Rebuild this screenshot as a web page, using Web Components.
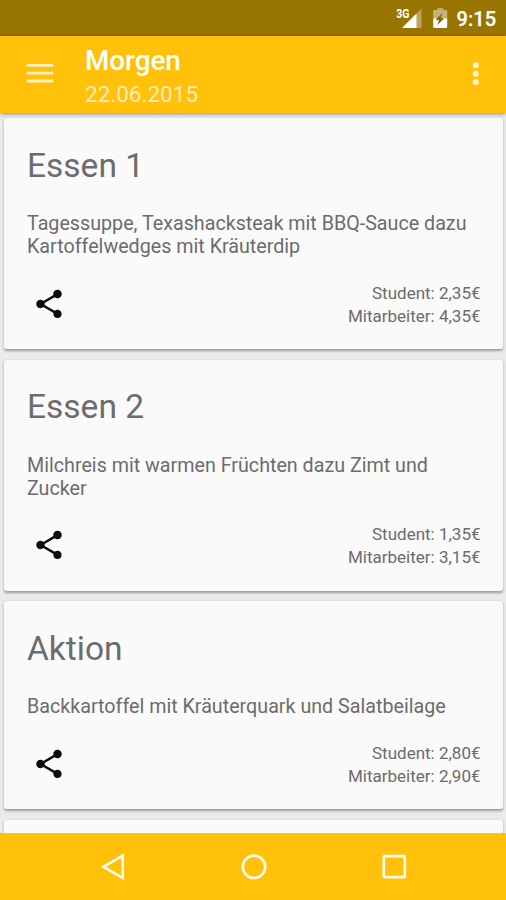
<!DOCTYPE html>
<html lang="de">
<head>
<meta charset="utf-8">
<title>Mensa</title>
<style>
html, body { margin: 0; height: 100%; overflow: hidden; }
body { font-family: Roboto, "Liberation Sans", sans-serif; }
</style>
</head>
<body>
<canteen-app></canteen-app>
<script>
const define = (name, html) => {
  const template = document.createElement('template');
  template.innerHTML = html;
  customElements.define(name, class extends HTMLElement {
    constructor() {
      super();
      this.attachShadow({ mode: 'open' }).append(template.content.cloneNode(true));
    }
  });
};

define('status-bar', `
<style>
:host { display: flex; justify-content: flex-end; align-items: center; height: 35.5px; padding-right: 11px; box-sizing: border-box; background: #987400; color: #fff; flex: none; }
time { font-size: 20px; line-height: 24px; font-weight: 500; width: 38.5px; white-space: nowrap; margin-top: 2px; letter-spacing: 0.1px; -webkit-text-stroke: .25px #fff; }
svg { flex: none; }
.signal { margin-right: 11px; }
.battery { margin-right: 9px; }
</style>
<svg class="signal" width="26" height="36" viewBox="396 0 26 36">
  <path d="M421.5 8.5V28H402z" fill="#fff" fill-opacity=".35"/>
  <path d="M416.5 13.5V28H402z" fill="#fff"/>
  <text x="396.3" y="17.6" font-size="12" font-weight="700" textLength="13.2" lengthAdjust="spacingAndGlyphs" fill="#fff">3G</text>
</svg>
<svg class="battery" width="15" height="36" viewBox="433 0 15 36">
  <path d="M433.2 11.2q0-1.2 1.2-1.2h2.8V8.2h6V10h2.8q1.2 0 1.2 1.2V19h-14z" fill="#fff" fill-opacity=".45"/>
  <path d="M433.2 18.5h14v8.3q0 1.2-1.2 1.2h-11.6q-1.2 0-1.2-1.2z" fill="#fff"/>
  <path d="M442.6 12.8 435.8 19.4l3.2 1.2-1.8 4.6 6.8-6.4-3.2-1.2z" fill="#8a6900"/>
</svg>
<time>9:15</time>`);

define('app-toolbar', `
<style>
:host { display: flex; height: 77.5px; background: #ffc10a; flex: none; position: relative; z-index: 1; box-shadow: 0 1px 4px rgba(0,0,0,.42); }
.menu { margin-left: 26px; width: 59px; }
.text { flex: 1; padding-top: 9px; }
slot { display: block; white-space: nowrap; }
slot[name=title] { color: #fff; font-size: 27.8px; font-weight: 500; line-height: 32px; }
slot[name=subtitle] { color: #fff; opacity: .7; font-size: 22.5px; line-height: 32px; margin-top: 1px; }
svg { flex: none; }
</style>
<svg class="menu" width="59" height="77" viewBox="26 36 59 77"><path d="M26.7 65.3h26.4M26.7 73.2h26.4M26.7 81h26.4" stroke="#fff" stroke-opacity=".75" stroke-width="2.8"/></svg>
<div class="text"><slot name="title"></slot><slot name="subtitle"></slot></div>
<svg width="40" height="77" viewBox="466 36 40 77" fill="#fff" fill-opacity=".82"><circle cx="475.7" cy="65.3" r="3"/><circle cx="475.7" cy="73.7" r="3"/><circle cx="475.7" cy="82" r="3"/></svg>`);

define('share-button', `
<style>:host { display: block; width: 34px; height: 34px; } svg { display: block; }</style>
<svg width="34" height="34" viewBox="0 0 24 24" fill="#0c0c0c"><path d="M18 16.08c-.76 0-1.44.3-1.96.77L8.91 12.7c.05-.23.09-.46.09-.7s-.04-.47-.09-.7l7.05-4.11c.54.5 1.25.81 2.04.81 1.66 0 3-1.34 3-3s-1.34-3-3-3-3 1.34-3 3c0 .24.04.47.09.7L8.04 9.81C7.5 9.31 6.79 9 6 9c-1.66 0-3 1.34-3 3s1.34 3 3 3c.79 0 1.5-.31 2.04-.81l7.12 4.16c-.05.21-.08.43-.08.65 0 1.61 1.31 2.92 2.92 2.92 1.61 0 2.92-1.31 2.92-2.92s-1.31-2.92-2.92-2.92z"/></svg>`);

define('meal-card', `
<style>
:host { display: block; box-sizing: border-box; flex: none; padding: 27.6px 22.5px 22.3px 23px; border-radius: 3px; background: #fafafa; color: #6c6c6c; box-shadow: 0 1.5px 2.5px rgba(0,0,0,.34); }
slot { display: block; }
slot[name=title] { font-size: 33.5px; line-height: 40px; color: #6c6c6c; }
slot[name=meal] { font-size: 19.7px; line-height: 23.1px; margin-top: 26.4px; }
footer { display: flex; justify-content: space-between; align-items: center; margin-top: 22.6px; padding-left: 5.4px; }
slot[name=prices] { font-size: 17px; line-height: 23px; text-align: right; padding-top: .8px; margin-bottom: -.8px; }
</style>
<slot name="title"></slot>
<slot name="meal"></slot>
<footer><share-button></share-button><slot name="prices"></slot></footer>`);

define('navigation-bar', `
<style>
:host { display: flex; justify-content: center; align-items: center; gap: 106.5px; height: 67px; padding-left: 1px; background: #ffc10a; flex: none; }
svg { display: block; fill: none; stroke: #fff; stroke-opacity: .93; stroke-width: 2.7; }
</style>
<svg width="34" height="34"><path d="M7.4 16.8 26.7 5.6v22.4z"/></svg>
<svg width="34" height="34"><circle cx="17" cy="16.8" r="11.2"/></svg>
<svg width="34" height="34"><rect x="6.8" y="6.2" width="21" height="21" rx="1"/></svg>`);

define('canteen-app', `
<style>
:host { display: flex; flex-direction: column; width: 506px; height: 900px; background: #ebebeb; overflow: hidden; }
main { flex: 1; min-height: 0; overflow: hidden; display: flex; flex-direction: column; gap: 10.5px; padding: 5px 3px 0 4px; }
</style>
<status-bar></status-bar>
<app-toolbar><span slot="title">Morgen</span><span slot="subtitle">22.06.2015</span></app-toolbar>
<main>
  <meal-card><span slot="title">Essen 1</span><span slot="meal">Tagessuppe, Texashacksteak mit BBQ-Sauce dazu<br>Kartoffelwedges mit Kräuterdip</span><div slot="prices">Student: 2,35€<br>Mitarbeiter: 4,35€</div></meal-card>
  <meal-card><span slot="title">Essen 2</span><span slot="meal">Milchreis mit warmen Früchten dazu Zimt und<br>Zucker</span><div slot="prices">Student: 1,35€<br>Mitarbeiter: 3,15€</div></meal-card>
  <meal-card><span slot="title">Aktion</span><span slot="meal">Backkartoffel mit Kräuterquark und Salatbeilage</span><div slot="prices">Student: 2,80€<br>Mitarbeiter: 2,90€</div></meal-card>
  <meal-card></meal-card>
</main>
<navigation-bar></navigation-bar>`);
</script>
</body>
</html>
